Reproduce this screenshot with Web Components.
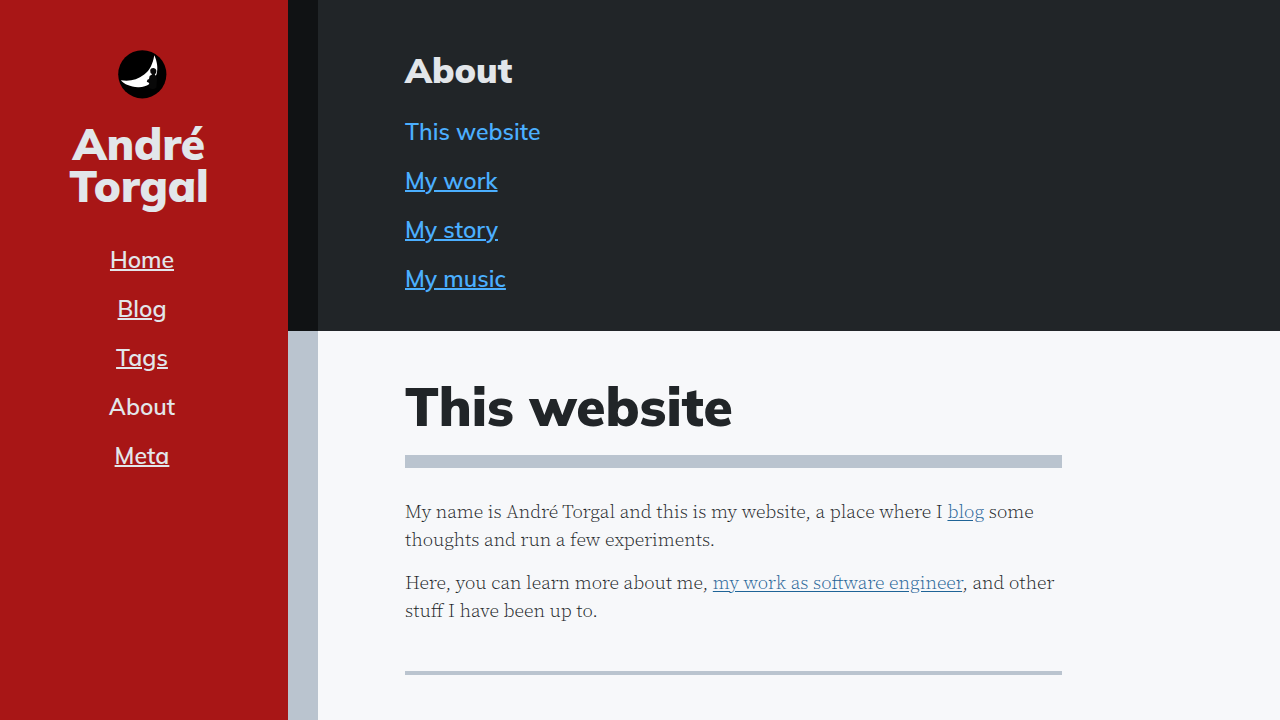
<!DOCTYPE html>
<html lang="en">
<head>
<meta charset="utf-8">
<meta name="viewport" content="width=device-width, initial-scale=1">
<title>This website – André Torgal</title>
<style>
  html, body { margin: 0; height: 100%; }
  body {
    --sans: Muli, Mulish, Lato, "Open Sans", sans-serif;
    --serif: "Source Serif Pro", "Source Serif 4", "Source Serif", "Noto Serif", "Liberation Serif", serif;
    --light: #e2e6ea;
    --dark: #212528;
    --rule: #bac4cf;
    background: #f7f8fa;
    color: var(--dark);
  }
</style>
</head>
<body>
<site-page>
  <site-sidebar slot="side">
    <nav-list>
      <nav-item href="#home">Home</nav-item>
      <nav-item href="#blog">Blog</nav-item>
      <nav-item href="#tags">Tags</nav-item>
      <nav-item>About</nav-item>
      <nav-item href="#meta">Meta</nav-item>
    </nav-list>
  </site-sidebar>
  <section-header slot="header" heading="About">
    <nav-list>
      <nav-item>This website</nav-item>
      <nav-item href="#work">My work</nav-item>
      <nav-item href="#story">My story</nav-item>
      <nav-item href="#music">My music</nav-item>
    </nav-list>
  </section-header>
  <site-article heading="This website">
    <text-block>My name is André Torgal and this is my website, a place where I <a href="#blog">blog</a> some thoughts and run a few experiments.</text-block>
    <text-block>Here, you can learn more about me, <a href="#work">my work as software engineer</a>, and other stuff I have been up to.</text-block>
  </site-article>
</site-page>
<script>
  const define = (name, html, setup) => {
    const template = document.createElement('template');
    template.innerHTML = html;
    customElements.define(name, class extends HTMLElement {
      constructor() {
        super();
        this.attachShadow({ mode: 'open' }).append(template.content.cloneNode(true));
      }
      connectedCallback() { if (setup) setup(this, this.shadowRoot); }
    });
  };

  const setHeading = (host, root) => {
    root.querySelector('.heading').textContent = host.getAttribute('heading');
  };

  const setLink = (host, root) => {
    const link = root.querySelector('a');
    if (host.hasAttribute('href')) link.href = host.getAttribute('href');
    else link.setAttribute('aria-current', 'page');
  };

  define('site-page', `
    <style>
      :host { display: grid; grid-template-columns: 22.5% minmax(0, 1fr); min-height: 100%; }
      .content { display: grid; grid-template-rows: auto 1fr; }
    </style>
    <slot name="side"></slot>
    <div class="content"><slot name="header"></slot><slot></slot></div>`);

  define('site-sidebar', `
    <style>
      :host {
        display: flex; flex-direction: column; align-items: center;
        box-sizing: border-box; padding: 50px 4px 32px 0;
        background: #a81616; color: var(--light); text-align: center;
      }
      svg { display: block; width: 49px; height: 49px; }
      h1 { margin: 24px 0 28px; padding-right: 6px; font: 900 44px/42px var(--sans); }
    </style>
    <svg viewBox="0 0 49 49" role="img" aria-label="Moon logo">
      <circle cx="24.3" cy="24.3" r="24.1" fill="#000"/>
      <path d="M36.3 5.2C39 11 40.3 18 38.6 24C36 32.5 28.5 37.6 20 37.2C12 36.5 6.5 34.5 2.8 30.2C12 31.6 19 29.8 26.2 24.5C32 20.2 34.9 13.5 36.3 5.2Z" fill="#fff"/>
      <path d="M32.2 20.4C32.6 17.4 38 17.2 38.4 20.8C38.4 22.6 37.7 23.6 36.8 24.4C39 26 39.4 28.8 38.7 32.2L38.4 37.4C35.5 39.8 31.8 39.6 30.6 36.8L31.2 33L28.8 31.8L29.4 29.8L31 29L31.6 26L34.2 24.3L32.6 23Z" fill="#080808"/>
    </svg>
    <h1>André<br>Torgal</h1>
    <slot></slot>`);

  define('nav-list', `
    <style>
      :host { display: block; }
      nav { display: flex; flex-direction: column; }
    </style>
    <nav><slot></slot></nav>`);

  define('nav-item', `
    <style>
      :host { display: block; font: 650 23px/49px var(--sans); }
      a { color: inherit; text-decoration: none; }
      a[href] { text-decoration: underline; text-underline-offset: 1px; }
    </style>
    <a><slot></slot></a>`, setLink);

  define('section-header', `
    <style>
      :host {
        display: block; padding: 48px 88px 28px 87px;
        border-left: 30px solid #101214; background: var(--dark);
        color: #4bafff;
      }
      h2 { margin: 0 0 14px; color: var(--light); font: 900 35px/45px var(--sans); }
    </style>
    <h2 class="heading"></h2>
    <slot></slot>`, setHeading);

  define('site-article', `
    <style>
      :host { display: block; padding: 45px 88px 44px 87px; border-left: 30px solid var(--rule); }
      article { max-width: 657px; }
      h1 {
        margin: 0 0 29px; padding-bottom: 19px; border-bottom: 13px solid var(--rule);
        font: 900 53px/60px var(--sans);
      }
      hr { margin: 47px 0 0; border: 0; border-top: 4px solid var(--rule); }
    </style>
    <article>
      <h1 class="heading"></h1>
      <slot></slot>
      <hr>
    </article>`, setHeading);

  define('text-block', `
    <style>
      :host { display: block; font: 350 19px/28px var(--serif); margin-bottom: 15px; }
      p { margin: 0; }
      ::slotted(a) { color: #1f6497; text-decoration: underline; text-underline-offset: 2px; }
    </style>
    <p><slot></slot></p>`);
</script>
</body>
</html>
